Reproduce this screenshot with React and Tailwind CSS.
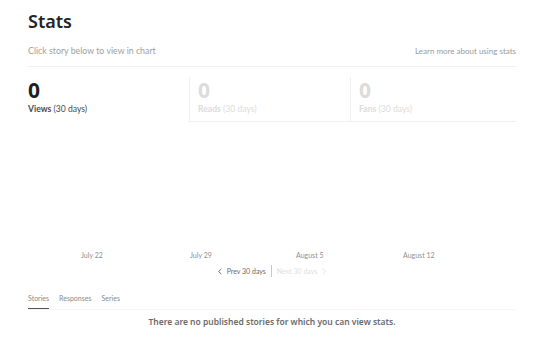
export default function App() {
  return (
    <div className="h-[343px] w-[540px] overflow-hidden bg-white font-['Lato',sans-serif] text-[#292929]">
      <div className="mx-[28px] w-[488px]">
        <h1 className="pt-[9px] font-['Noto_Sans',sans-serif] text-[18px] font-semibold leading-[24px] text-[#242424]">
          Stats
        </h1>
        <div className="mt-[12px] flex items-end justify-between border-b border-[#f0f0f0] pb-[9px]">
          <span className="text-[8.8px] leading-[12px] text-[#a0a0a0]">Click story below to view in chart</span>
          <span className="text-[8px] leading-[12px] text-[#9a9a9a]">Learn more about using stats</span>
        </div>

        <div className="mt-[10px] grid grid-cols-[161px_161px_1fr]">
          <div className="pb-[6px]">
            <div className="font-['Noto_Sans',sans-serif] text-[21px] font-bold leading-[26px] text-[#1f1f1f]">0</div>
            <div className="text-[8.6px] leading-[12px] text-[#4a4a4a]">
              <span className="font-bold">Views</span> (30 days)
            </div>
          </div>
          <div className="border-b border-l border-[#f0f0f0] pb-[6px] pl-[8px]">
            <div className="font-['Noto_Sans',sans-serif] text-[21px] font-bold leading-[26px] text-[#dcdcdc]">0</div>
            <div className="text-[8.6px] leading-[12px] text-[#dcdcdc]">
              <span className="font-bold">Reads</span> (30 days)
            </div>
          </div>
          <div className="border-b border-l border-[#f0f0f0] pb-[6px] pl-[8px]">
            <div className="font-['Noto_Sans',sans-serif] text-[21px] font-bold leading-[26px] text-[#dcdcdc]">0</div>
            <div className="text-[8.6px] leading-[12px] text-[#dcdcdc]">
              <span className="font-bold">Fans</span> (30 days)
            </div>
          </div>
        </div>

        <div className="h-[127px]" />

        <div className="relative h-[12px] text-[7px] leading-[12px] text-[#8f8f8f]">
          <span className="absolute left-[53px]">July 22</span>
          <span className="absolute left-[162px]">July 29</span>
          <span className="absolute left-[268px]">August 5</span>
          <span className="absolute left-[375px]">August 12</span>
        </div>

        <div className="mt-[4px] flex items-center justify-center text-[7px] leading-[12px]">
          <span className="flex items-center gap-[4px] pr-[5px] text-[#6b6b6b]">
            <svg width="6" height="7" viewBox="0 0 6 7" fill="none" stroke="#6b6b6b" strokeWidth="0.9">
              <path d="M4.5 0.8 L1.5 3.5 L4.5 6.2" />
            </svg>
            Prev 30 days
          </span>
          <span className="h-[12px] w-px bg-[#c8c8c8]" />
          <span className="flex items-center gap-[4px] pl-[5px] text-[#e0e0e0]">
            Next 30 days
            <svg width="6" height="7" viewBox="0 0 6 7" fill="none" stroke="#e0e0e0" strokeWidth="0.9">
              <path d="M1.5 0.8 L4.5 3.5 L1.5 6.2" />
            </svg>
          </span>
        </div>

        <div className="mt-[15px] flex gap-[10px] border-b border-[#f5f5f5] text-[7px] leading-[12px] text-[#8a8a8a]">
          <span className="border-b border-[#555] pb-[4px]">Stories</span>
          <span className="pb-[4px]">Responses</span>
          <span className="pb-[4px]">Series</span>
        </div>

        <div className="mt-[6px] text-center font-['Noto_Sans',sans-serif] text-[8.5px] font-semibold leading-[12px] text-[#6b6b6b]">
          There are no published stories for which you can view stats.
        </div>
      </div>
    </div>
  );
}
